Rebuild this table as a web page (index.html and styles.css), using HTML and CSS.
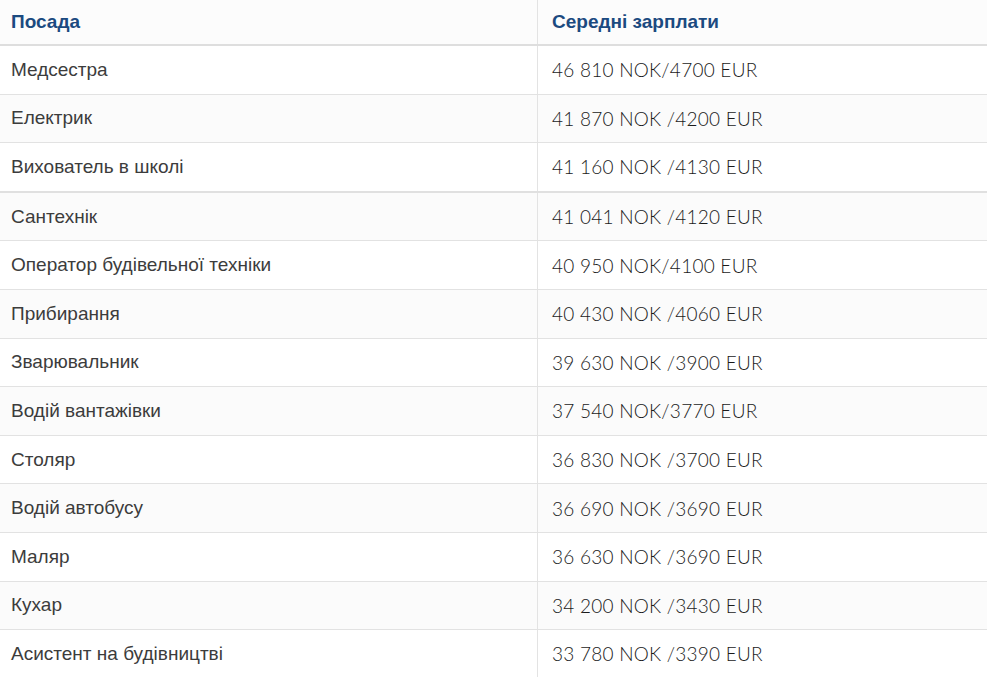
FILE: index.html
```html
<!DOCTYPE html>
<html lang="uk">
<head>
<meta charset="utf-8">
<link rel="stylesheet" href="styles.css">
</head>
<body>
<table class="salaries">
  <thead>
    <tr><th class="col-pos">Посада</th><th class="col-pay">Середні зарплати</th></tr>
  </thead>
  <tbody>
    <tr><td class="col-pos">Медсестра</td><td class="col-pay">46 810 NOK/4700 EUR</td></tr>
    <tr><td class="col-pos">Електрик</td><td class="col-pay">41 870 NOK /4200 EUR</td></tr>
    <tr class="thick"><td class="col-pos">Вихователь в школі</td><td class="col-pay">41 160 NOK /4130 EUR</td></tr>
    <tr><td class="col-pos">Сантехнік</td><td class="col-pay">41 041 NOK /4120 EUR</td></tr>
    <tr><td class="col-pos">Оператор будівельної техніки</td><td class="col-pay">40 950 NOK/4100 EUR</td></tr>
    <tr><td class="col-pos">Прибирання</td><td class="col-pay">40 430 NOK /4060 EUR</td></tr>
    <tr><td class="col-pos">Зварювальник</td><td class="col-pay">39 630 NOK /3900 EUR</td></tr>
    <tr><td class="col-pos">Водій вантажівки</td><td class="col-pay">37 540 NOK/3770 EUR</td></tr>
    <tr><td class="col-pos">Столяр</td><td class="col-pay">36 830 NOK /3700 EUR</td></tr>
    <tr><td class="col-pos">Водій автобусу</td><td class="col-pay">36 690 NOK /3690 EUR</td></tr>
    <tr><td class="col-pos">Маляр</td><td class="col-pay">36 630 NOK /3690 EUR</td></tr>
    <tr><td class="col-pos">Кухар</td><td class="col-pay">34 200 NOK /3430 EUR</td></tr>
    <tr><td class="col-pos">Асистент на будівництві</td><td class="col-pay">33 780 NOK /3390 EUR</td></tr>
  </tbody>
</table>
</body>
</html>
```
FILE: styles.css
```css
html, body {
  margin: 0;
  padding: 0;
  background: #ffffff;
}

.salaries {
  width: 987px;
  border-collapse: collapse;
  table-layout: fixed;
  font-family: "Liberation Sans", Arial, sans-serif;
}

.salaries .col-pos {
  width: 526px;
  padding: 0 0 0 11px;
  border-right: 1px solid #e3e3e3;
}

.salaries .col-pay {
  padding: 0 0 0 14px;
}

.salaries th {
  height: 44px;
  text-align: left;
  font-weight: bold;
  font-size: 19px;
  color: #1b4a80;
  background: #fcfcfc;
  border-bottom: 2px solid #dedede;
  vertical-align: middle;
}

.salaries td {
  height: 47.6px;
  font-size: 19px;
  color: #3c3c3c;
  border-bottom: 1px solid #e2e2e2;
  vertical-align: middle;
}

.salaries tbody tr:nth-child(even) {
  background: #fbfbfb;
}

.salaries tr.thick td {
  border-bottom: 2px solid #e0e0e0;
}

.salaries td.col-pay {
  font-family: "Lato", "Liberation Sans", sans-serif;
  font-weight: 300;
  letter-spacing: 0.25px;
  color: #1a1a1a;
}
```
